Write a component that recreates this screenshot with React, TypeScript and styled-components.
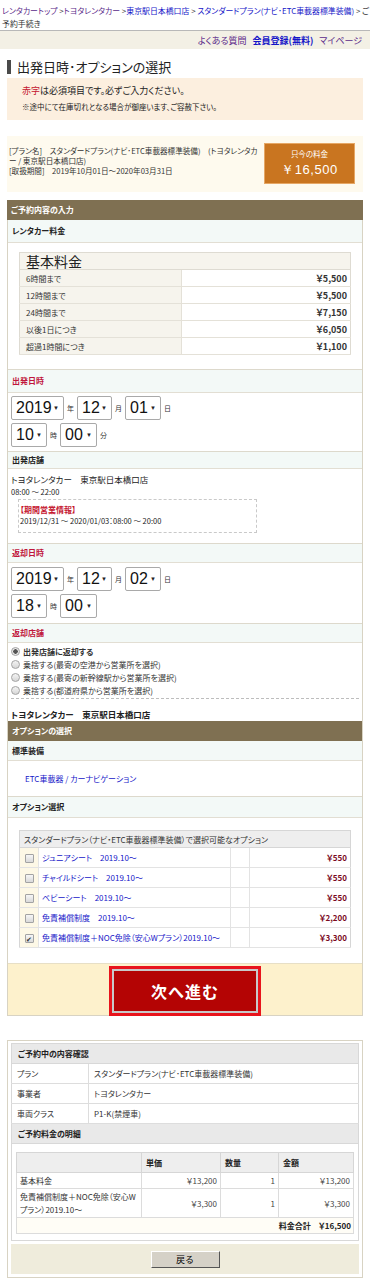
import React from "react";
import styled, { createGlobalStyle } from "styled-components";

const GlobalStyle = createGlobalStyle`
  body {
    margin: 0;
    background: #fff;
    color: #222;
    font-family: "Noto Sans CJK JP", "Liberation Sans", sans-serif;
    font-size: 8px;
    font-feature-settings: "palt";
  }
`;

const priceRows = [
  ["6時間まで", "￥5,500"],
  ["12時間まで", "￥5,500"],
  ["24時間まで", "￥7,150"],
  ["以後1日につき", "￥6,050"],
  ["超過1時間につき", "￥1,100"],
];

const options = [
  { name: "ジュニアシート　2019.10〜", price: "￥550", on: false },
  { name: "チャイルドシート　2019.10〜", price: "￥550", on: false },
  { name: "ベビーシート　2019.10〜", price: "￥550", on: false },
  { name: "免責補償制度　2019.10〜", price: "￥2,200", on: false },
  { name: "免責補償制度＋NOC免除（安心Wプラン）2019.10〜", price: "￥3,300", on: true },
];

const returnChoices = [
  "出発店舗に返却する",
  "乗捨する(最寄の空港から営業所を選択)",
  "乗捨する(最寄の新幹線駅から営業所を選択)",
  "乗捨する(都道府県から営業所を選択)",
];

const Sel = ({ v, w }: { v: string; w: number }) => (
  <SelectBox $w={w}>
    {v}
    <Arrow>▼</Arrow>
  </SelectBox>
);

const App: React.FC = () => {
  return (
    <Page>
      <GlobalStyle />
      <Breadcrumb>
        <Visited>レンタカートップ</Visited>{" >"}
        <Visited>トヨタレンタカー</Visited>{" >"}
        <Link>東京駅日本橋口店</Link>{" > "}
        <Link>スタンダードプラン(ナビ･ETC車載器標準装備)</Link>{" > ご予約手続き"}
      </Breadcrumb>
      <TopBar>
        <Visited>よくある質問</Visited>
        <Link $bold>会員登録(無料)</Link>
        <Visited>マイページ</Visited>
      </TopBar>

      <Title>出発日時･オプションの選択</Title>

      <Notice>
        <NoticeMain>
          <RedText>赤字</RedText>は必須項目です。必ずご入力ください。
        </NoticeMain>
        <NoticeSub>※途中にて在庫切れとなる場合が御座います、ご容赦下さい。</NoticeSub>
      </Notice>

      <PlanBox>
        <PlanText>
          [プラン名]　スタンダードプラン(ナビ･ETC車載器標準装備)　(トヨタレンタカー / 東京駅日本橋口店)
          <br />
          [取扱期間]　2019年10月01日〜2020年03月31日
        </PlanText>
        <PriceBox>
          <PriceLabel>只今の料金</PriceLabel>
          <PriceValue>￥16,500</PriceValue>
        </PriceBox>
      </PlanBox>

      <FormBlock>
        <BarHead>ご予約内容の入力</BarHead>
        <SubHead $h={22}>レンタカー料金</SubHead>
        <Body $pad="9px 11px 14px">
          <PriceTable>
            <tbody>
              <tr>
                <PriceHead colSpan={2}>基本料金</PriceHead>
              </tr>
              {priceRows.map(([k, v]) => (
                <tr key={k}>
                  <PriceKey>{k}</PriceKey>
                  <PriceVal>{v}</PriceVal>
                </tr>
              ))}
            </tbody>
          </PriceTable>
        </Body>

        <SubHead $red $line $h={22}>出発日時</SubHead>
        <Body $pad="3px 3px 4px">
          <DateRow>
            <Sel v="2019" w={53} />
            <Unit>年</Unit>
            <Sel v="12" w={35} />
            <Unit>月</Unit>
            <Sel v="01" w={36} />
            <Unit>日</Unit>
          </DateRow>
          <DateRow>
            <Sel v="10" w={36} />
            <Unit>時</Unit>
            <Sel v="00" w={37} />
            <Unit>分</Unit>
          </DateRow>
        </Body>

        <SubHead $line $h={16}>出発店舗</SubHead>
        <Body $pad="3px 3px 10px">
          <StoreName>トヨタレンタカー　東京駅日本橋口店</StoreName>
          <StoreHours>08:00 〜 22:00</StoreHours>
          <SpecialBox>
            <SpecialTitle>【期間営業情報】</SpecialTitle>
            <SpecialText>2019/12/31 〜 2020/01/03：08:00 〜 20:00</SpecialText>
          </SpecialBox>
        </Body>

        <SubHead $red $line $h={18}>返却日時</SubHead>
        <Body $pad="4px 3px 5px">
          <DateRow>
            <Sel v="2019" w={53} />
            <Unit>年</Unit>
            <Sel v="12" w={35} />
            <Unit>月</Unit>
            <Sel v="02" w={36} />
            <Unit>日</Unit>
          </DateRow>
          <DateRow>
            <Sel v="18" w={36} />
            <Unit>時</Unit>
            <Sel v="00" w={37} />
          </DateRow>
        </Body>

        <SubHead $red $line $h={18}>返却店舗</SubHead>
        <Body $pad="2px 3px 0">
          {returnChoices.map((c, i) => (
            <RadioRow key={c} $bold={i === 0}>
              <Radio $on={i === 0} />
              {c}
            </RadioRow>
          ))}
          <ReturnStore>トヨタレンタカー　東京駅日本橋口店</ReturnStore>
        </Body>

        <BarHead $inner>オプションの選択</BarHead>
        <SubHead $h={19}>標準装備</SubHead>
        <Body $pad="12px 17px 12px">
          <Link>ETC車載器 / カーナビゲーション</Link>
        </Body>

        <SubHead $line $h={20}>オプション選択</SubHead>
        <Body $pad="12px 11px 15px">
          <OptionTable>
            <tbody>
              <tr>
                <OptionHead colSpan={4}>
                  スタンダードプラン（ナビ・ETC車載器標準装備）で選択可能なオプション
                </OptionHead>
              </tr>
              {options.map((o) => (
                <tr key={o.name}>
                  <CheckCell>
                    <CheckBox>{o.on ? "✔" : ""}</CheckBox>
                  </CheckCell>
                  <OptionName>{o.name}</OptionName>
                  <BlankCell />
                  <OptionPrice>{o.price}</OptionPrice>
                </tr>
              ))}
            </tbody>
          </OptionTable>
        </Body>

        <SubmitArea>
          <NextButton>
            <NextInner>次へ進む</NextInner>
          </NextButton>
        </SubmitArea>
      </FormBlock>

      <ConfirmBox>
        <ConfirmTable>
          <tbody>
            <tr>
              <ConfirmHead colSpan={2}>ご予約中の内容確認</ConfirmHead>
            </tr>
            <tr>
              <ConfirmKey>プラン</ConfirmKey>
              <ConfirmVal>スタンダードプラン(ナビ･ETC車載器標準装備)</ConfirmVal>
            </tr>
            <tr>
              <ConfirmKey>事業者</ConfirmKey>
              <ConfirmVal>トヨタレンタカー</ConfirmVal>
            </tr>
            <tr>
              <ConfirmKey>車両クラス</ConfirmKey>
              <ConfirmVal>P1-K(禁煙車)</ConfirmVal>
            </tr>
            <tr>
              <ConfirmHead colSpan={2}>ご予約料金の明細</ConfirmHead>
            </tr>
            <tr>
              <DetailWrap colSpan={2}>
                <DetailTable>
                  <tbody>
                    <tr>
                      <DetailTh />
                      <DetailTh $w={70}>単価</DetailTh>
                      <DetailTh $w={49}>数量</DetailTh>
                      <DetailTh $w={66}>金額</DetailTh>
                    </tr>
                    <tr>
                      <DetailTd>基本料金</DetailTd>
                      <DetailNum>￥13,200</DetailNum>
                      <DetailNum>1</DetailNum>
                      <DetailNum>￥13,200</DetailNum>
                    </tr>
                    <tr>
                      <DetailTd>免責補償制度＋NOC免除（安心Wプラン）2019.10〜</DetailTd>
                      <DetailNum>￥3,300</DetailNum>
                      <DetailNum>1</DetailNum>
                      <DetailNum>￥3,300</DetailNum>
                    </tr>
                    <tr>
                      <TotalCell colSpan={4}>料金合計　￥16,500</TotalCell>
                    </tr>
                  </tbody>
                </DetailTable>
              </DetailWrap>
            </tr>
          </tbody>
        </ConfirmTable>
        <BackArea>
          <BackButton>戻る</BackButton>
        </BackArea>
      </ConfirmBox>
    </Page>
  );
};

export default App;

const Page = styled.div`
  width: 370px;
  padding-bottom: 12px;
`;

const Link = styled.a<{ $bold?: boolean }>`
  color: #1515c8;
  font-weight: ${(p) => (p.$bold ? "bold" : "normal")};
  cursor: pointer;
`;

const Visited = styled.a`
  color: #5b2a8a;
  cursor: pointer;
`;

const Breadcrumb = styled.div`
  padding: 4px 0 0 2px;
  height: 26px;
  line-height: 13px;
  font-size: 7.9px;
  color: #333;
`;

const TopBar = styled.div`
  border-top: 1px solid #b8b8b8;
  background: #f3f0e5;
  height: 18px;
  display: flex;
  justify-content: flex-end;
  align-items: center;
  gap: 6px;
  padding-right: 8px;
  font-size: 9px;
`;

const Title = styled.h1`
  margin: 11px 7px 4px;
  border-left: 4px solid #4a4a4a;
  padding-left: 6px;
  height: 14px;
  line-height: 14px;
  font-size: 13px;
  font-weight: normal;
  color: #222;
`;

const Notice = styled.div`
  margin: 0 7px;
  height: 42px;
  box-sizing: border-box;
  padding: 6px 15px 0;
  background: #fcefdf;
`;

const NoticeMain = styled.div`
  font-size: 9px;
  line-height: 14px;
`;

const NoticeSub = styled.div`
  font-size: 7.5px;
  line-height: 14px;
  margin-top: 2px;
`;

const RedText = styled.span`
  color: #c4142e;
`;

const PlanBox = styled.div`
  margin: 16px 7px 0;
  height: 56px;
  box-sizing: border-box;
  padding: 7px 8px 0 2px;
  background: #fefaee;
  display: flex;
  gap: 6px;
`;

const PlanText = styled.div`
  flex: 1;
  font-size: 7.6px;
  line-height: 10px;
  padding-top: 3px;
  color: #333;
`;

const PriceBox = styled.div`
  width: 91px;
  height: 41px;
  box-sizing: border-box;
  flex-shrink: 0;
  background: #c97520;
  border: 1px solid #e6a765;
  color: #fff;
  display: flex;
  flex-direction: column;
  align-items: center;
  justify-content: center;
  gap: 2px;
`;

const PriceLabel = styled.div`
  font-size: 7.5px;
`;

const PriceValue = styled.div`
  font-size: 13px;
  font-family: "Liberation Sans", Arial, sans-serif;
  letter-spacing: 0.5px;
`;

const FormBlock = styled.div`
  margin: 8px 7px 0;
  border: 1px solid #d8d3c3;
  border-top: none;
`;

const BarHead = styled.div<{ $inner?: boolean }>`
  background: #7f7052;
  color: #fff;
  font-weight: bold;
  height: 20px;
  line-height: 20px;
  padding-left: 4px;
  margin: ${(p) => (p.$inner ? "0" : "0 -1px")};
`;

const SubHead = styled.div<{ $red?: boolean; $line?: boolean; $h: number }>`
  background: #f3f9f7;
  color: ${(p) => (p.$red ? "#c0163c" : "#222")};
  font-weight: bold;
  height: ${(p) => p.$h}px;
  line-height: ${(p) => p.$h}px;
  padding-left: 4px;
  border-top: ${(p) => (p.$line ? "1px solid #ddd9cc" : "none")};
  border-bottom: 1px solid #e2ded3;
`;

const Body = styled.div<{ $pad: string }>`
  padding: ${(p) => p.$pad};
`;

const PriceTable = styled.table`
  width: 100%;
  border-collapse: collapse;
  border: 1px solid #dedbd2;
`;

const PriceHead = styled.td`
  background: #f6f4ed;
  font-size: 14px;
  line-height: 16px;
  padding: 0 6px;
  border-bottom: 1px solid #dedbd2;
`;

const PriceKey = styled.td`
  width: 149px;
  height: 16px;
  padding: 0 6px;
  background: #f6f4ed;
  border-bottom: 1px solid #e4e1d8;
  border-right: 1px solid #e4e1d8;
  color: #333;
`;

const PriceVal = styled.td`
  text-align: right;
  padding-right: 3px;
  font-weight: bold;
  font-size: 9px;
  color: #333;
  border-bottom: 1px solid #e4e1d8;
`;

const DateRow = styled.div`
  display: flex;
  align-items: center;
  height: 24px;
  margin-bottom: 3px;
  &:last-child {
    margin-bottom: 0;
  }
`;

const SelectBox = styled.div<{ $w: number }>`
  width: ${(p) => p.$w}px;
  height: 24px;
  box-sizing: border-box;
  display: flex;
  align-items: center;
  justify-content: space-between;
  padding: 0 4px 0 4px;
  border: 1px solid #a9a9a9;
  border-radius: 2px;
  background: #fff;
  font-family: "Liberation Sans", Arial, sans-serif;
  font-size: 16px;
  color: #111;
`;

const Arrow = styled.span`
  font-size: 6px;
  color: #222;
`;

const Unit = styled.span`
  font-size: 7px;
  width: 13px;
  text-align: center;
  color: #333;
`;

const StoreName = styled.div`
  font-size: 8.5px;
  line-height: 14px;
`;

const StoreHours = styled.div`
  font-size: 7.5px;
  line-height: 12px;
  margin-bottom: 1px;
`;

const SpecialBox = styled.div`
  width: 239px;
  height: 34px;
  box-sizing: border-box;
  margin-left: 7px;
  border: 1px dashed #c9c9c9;
  padding: 4px 1px 0;
`;

const SpecialTitle = styled.div`
  color: #c4142e;
  font-weight: bold;
  line-height: 11px;
`;

const SpecialText = styled.div`
  font-size: 7.5px;
  line-height: 11px;
`;

const RadioRow = styled.div<{ $bold?: boolean }>`
  display: flex;
  align-items: center;
  gap: 3px;
  height: 13px;
  font-weight: ${(p) => (p.$bold ? "bold" : "normal")};
  color: #333;
`;

const Radio = styled.span<{ $on?: boolean }>`
  width: 9px;
  height: 9px;
  box-sizing: border-box;
  border-radius: 50%;
  border: 1px solid #a3a3a3;
  background: ${(p) =>
    p.$on
      ? "radial-gradient(circle, #555 0 2px, #e9e9e9 2.5px)"
      : "linear-gradient(#f4f4f4, #d6d6d6)"};
`;

const ReturnStore = styled.div`
  margin-top: 1px;
  border-top: 1px dashed #bdbdbd;
  padding-top: 8px;
  height: 14px;
  font-weight: bold;
  font-size: 8.5px;
  line-height: 14px;
`;

const OptionTable = styled.table`
  width: 100%;
  border-collapse: collapse;
  border: 1px solid #d6d6d6;
`;

const OptionHead = styled.td`
  background: #eeeeee;
  height: 16px;
  padding: 0 4px;
  color: #333;
  border-bottom: 1px solid #d6d6d6;
`;

const CheckCell = styled.td`
  width: 16px;
  height: 17px;
  background: #fdf8e6;
  text-align: center;
  border-bottom: 1px solid #e3e3e3;
  border-right: 1px solid #e3e3e3;
`;

const CheckBox = styled.span`
  display: inline-flex;
  align-items: center;
  justify-content: center;
  width: 9px;
  height: 9px;
  box-sizing: border-box;
  border: 1px solid #a3a3a3;
  border-radius: 1px;
  background: linear-gradient(#f6f6f6, #d9d9d9);
  font-size: 7px;
  color: #333;
  vertical-align: middle;
`;

const OptionName = styled.td`
  color: #1515c8;
  padding-left: 3px;
  border-bottom: 1px solid #e3e3e3;
  border-right: 1px solid #e3e3e3;
`;

const BlankCell = styled.td`
  width: 16px;
  border-bottom: 1px solid #e3e3e3;
  border-right: 1px solid #e3e3e3;
`;

const OptionPrice = styled.td`
  width: 96px;
  text-align: right;
  padding-right: 3px;
  font-weight: bold;
  color: #7a0a1e;
  border-bottom: 1px solid #e3e3e3;
`;

const SubmitArea = styled.div`
  background: #fdf1cc;
  border-top: 1px solid #e7dfc6;
  height: 52px;
  display: flex;
  justify-content: center;
  align-items: flex-start;
  padding-top: 2px;
  box-sizing: border-box;
`;

const NextButton = styled.button`
  width: 152px;
  height: 50px;
  padding: 0;
  border: 3px solid #e8141c;
  background: #e8141c;
  cursor: pointer;
`;

const NextInner = styled.span`
  display: flex;
  align-items: center;
  justify-content: center;
  height: 100%;
  box-sizing: border-box;
  border: 2px solid #c9c9c9;
  background: #b40404;
  color: #fff;
  font-size: 16px;
  font-weight: bold;
  letter-spacing: 1px;
  font-family: "Noto Sans CJK JP", sans-serif;
`;

const ConfirmBox = styled.div`
  margin: 24px 7px 0;
  border: 1px solid #d8d3c3;
  padding: 2px 3px 3px;
`;

const ConfirmTable = styled.table`
  width: 100%;
  border-collapse: collapse;
  border: 1px solid #d8d8d8;
`;

const ConfirmHead = styled.td`
  background: #e9e9e9;
  height: 19px;
  padding: 0 6px;
  font-weight: bold;
  border-bottom: 1px solid #d8d8d8;
`;

const ConfirmKey = styled.td`
  width: 66px;
  height: 19px;
  padding: 0 5px;
  border-bottom: 1px solid #dddddd;
  border-right: 1px solid #dddddd;
  color: #333;
`;

const ConfirmVal = styled.td`
  padding: 0 5px;
  border-bottom: 1px solid #dddddd;
  color: #333;
`;

const DetailWrap = styled.td`
  padding: 8px 4px 6px;
`;

const DetailTable = styled.table`
  width: 100%;
  border-collapse: collapse;
  border: 1px solid #d6d6d6;
`;

const DetailTh = styled.td<{ $w?: number }>`
  background: #eeeeee;
  height: 19px;
  font-weight: bold;
  padding: 0 4px;
  width: ${(p) => (p.$w ? `${p.$w}px` : "auto")};
  border: 1px solid #d6d6d6;
`;

const DetailTd = styled.td`
  padding: 1px 3px;
  line-height: 13px;
  font-size: 8px;
  border: 1px solid #dcdcdc;
  color: #333;
`;

const DetailNum = styled.td`
  text-align: right;
  padding: 0 3px;
  border: 1px solid #dcdcdc;
  color: #444;
`;

const TotalCell = styled.td`
  text-align: right;
  height: 15px;
  padding: 0 2px;
  font-weight: bold;
  background: #fffdf6;
  border: 1px solid #dcdcdc;
`;

const BackArea = styled.div`
  margin-top: 3px;
  background: #efecdc;
  height: 30px;
  display: flex;
  align-items: center;
  justify-content: center;
`;

const BackButton = styled.button`
  width: 69px;
  height: 17px;
  padding: 0;
  font-size: 9px;
  font-family: "Noto Sans CJK JP", sans-serif;
  background: #d5d1c7;
  border: 1px solid;
  border-color: #fff #555 #555 #fff;
  cursor: pointer;
`;
